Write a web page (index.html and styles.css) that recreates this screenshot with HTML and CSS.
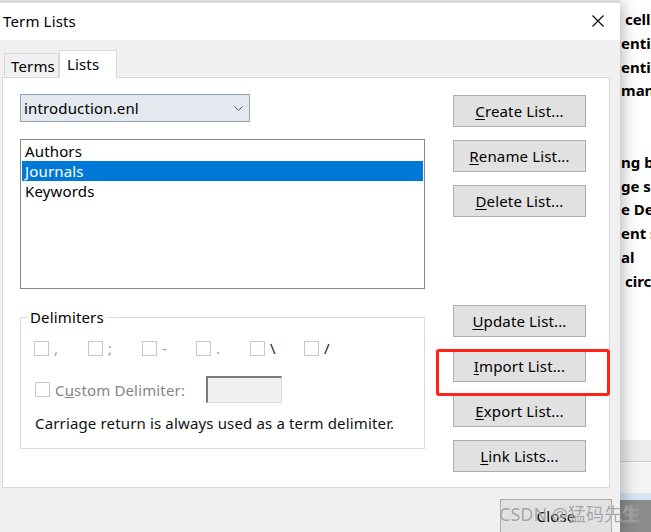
FILE: index.html
```html
<!DOCTYPE html>
<html lang="en">
  <head>
    <meta charset="UTF-8" />
    <meta name="viewport" content="width=device-width, initial-scale=1.0" />
    <title>Term Lists</title>
    <link rel="stylesheet" href="styles.css">
  </head>
  <body>
    <div class="screen">
      <div class="dialog">
        <div class="titlebar">
          <span class="title">Term Lists</span>
          <svg class="close-x" width="12" height="12" viewBox="0 0 12 12">
            <path d="M0.5 0.5 L11.5 11.5 M11.5 0.5 L0.5 11.5" stroke="#000" stroke-width="1.1" fill="none" />
          </svg>
        </div>

        <div class="dialog-body">
          <div class="tabs">
            <div class="tab">Terms</div>
            <div class="tab active">Lists</div>
          </div>

          <div class="tab-panel">
            <div class="left-col">
              <div class="combo">
                <span>introduction.enl</span>
                <svg class="chevron" width="9" height="5" viewBox="0 0 9 5">
                  <path d="M0.5 0.5 L4.5 4.5 L8.5 0.5" stroke="#555" stroke-width="1" fill="none" />
                </svg>
              </div>

              <div class="listbox">
                <div class="list-item">Authors</div>
                <div class="list-item selected">Journals</div>
                <div class="list-item">Keywords</div>
              </div>

              <fieldset class="delims">
                <legend>Delimiters</legend>
                <div class="check-row">
                  <div class="check"><span class="box"></span>,</div>
                  <div class="check"><span class="box"></span>;</div>
                  <div class="check"><span class="box"></span>-</div>
                  <div class="check"><span class="box"></span>.</div>
                  <div class="check dark"><span class="box"></span>\</div>
                  <div class="check dark"><span class="box"></span>/</div>
                </div>
                <div class="custom-row">
                  <span class="box"></span>
                  <span class="custom-label">C<u>u</u>stom Delimiter:</span>
                  <span class="custom-input"></span>
                </div>
                <p class="note">Carriage return is always used as a term delimiter.</p>
              </fieldset>
            </div>

            <div class="btn-col">
              <button class="btn"><u>C</u>reate List...</button>
              <button class="btn"><u>R</u>ename List...</button>
              <button class="btn"><u>D</u>elete List...</button>
              <button class="btn update"><u>U</u>pdate List...</button>
              <div class="marked">
                <button class="btn"><u>I</u>mport List...</button>
                <span class="highlight"></span>
              </div>
              <button class="btn"><u>E</u>xport List...</button>
              <button class="btn"><u>L</u>ink Lists...</button>
            </div>
          </div>

          <div class="footer">
            <button class="btn close-btn">Close</button>
          </div>
        </div>
      </div>

      <div class="backdrop">
        <div class="doc-text">
          <div class="doc-line">&nbsp;cells</div>
          <div class="doc-line">entia</div>
          <div class="doc-line">entia</div>
          <div class="doc-line">man</div>
          <div class="doc-line">&nbsp;</div>
          <div class="doc-line">&nbsp;</div>
          <div class="doc-line">ng bl</div>
          <div class="doc-line">ge se</div>
          <div class="doc-line">e Dev</div>
          <div class="doc-line">ent s</div>
          <div class="doc-line">al</div>
          <div class="doc-line">&nbsp;circu</div>
        </div>
        <div class="band band-a"></div>
        <div class="band band-b"></div>
        <div class="band band-c"></div>
        <div class="band band-d"></div>
      </div>

      <div class="watermark">CSDN @猛码先生</div>
    </div>
  </body>
</html>
```

FILE: styles.css
```css
html,
body {
  margin: 0;
  height: 100%;
  overflow: hidden;
}

body {
  font-family: "Segoe UI", "Noto Sans", Roboto, sans-serif;
  font-size: 15px;
  line-height: 20px;
  letter-spacing: 0.15px;
  color: #000;
  background-color: #fff;
}

.screen {
  position: relative;
  display: flex;
  height: 532px;
  width: 651px;
  overflow: hidden;
}

/* dialog window */

.dialog {
  position: relative;
  z-index: 1;
  width: 620px;
  flex-shrink: 0;
  border-top: 3px solid #dadada;
  box-shadow: 3px 2px 14px rgba(0, 0, 0, 0.28);
  background-color: #f0f0f0;
}

.titlebar {
  height: 37px;
  background-color: #fff;
  display: flex;
  align-items: center;
  justify-content: space-between;
  padding: 0 16px 0 3px;
}

.title {
  margin-top: -2px;
}

.close-x {
  margin-top: -1px;
}

.dialog-body {
  padding-top: 10px;
}

.tabs {
  display: flex;
  align-items: flex-end;
  height: 27px;
  margin-left: 4px;
}

.tab {
  height: 24px;
  box-sizing: border-box;
  padding: 0 6px;
  border: 1px solid #d9d9d9;
  border-bottom: none;
  display: flex;
  align-items: center;
  background-color: #f0f0f0;
  width: 55px;
}

.tab.active {
  position: relative;
  z-index: 1;
  height: 28px;
  margin-bottom: -1px;
  width: 58px;
  padding-left: 7px;
  background-color: #fff;
  padding-bottom: 2px;
}

.tab-panel {
  margin-left: 2px;
  width: 608px;
  height: 411px;
  box-sizing: border-box;
  border: 1px solid #d9d9d9;
  background-color: #fff;
  padding: 16px 0 0 17px;
  display: flex;
  gap: 27px;
}

/* left column */

.left-col {
  width: 406px;
}

.combo {
  width: 230px;
  height: 28px;
  box-sizing: border-box;
  border: 1px solid #8ea3ba;
  background-color: #e4e9ef;
  display: flex;
  align-items: center;
  justify-content: space-between;
  padding: 0 6px 0 3px;
}

.listbox {
  margin-top: 17px;
  width: 405px;
  height: 150px;
  box-sizing: border-box;
  border: 1px solid #828790;
  padding: 1px;
}

.list-item {
  padding-left: 3px;
  height: 20px;
  line-height: 20px;
}

.list-item.selected {
  background-color: #0078d7;
  color: #fff;
}

.delims {
  margin: 18px 0 0;
  width: 405px;
  box-sizing: border-box;
  border: 1px solid #dcdcdc;
  padding: 0 0 15px 13px;
  min-inline-size: 0;
}

.delims legend {
  margin-left: -6px;
  padding: 0 2px;
}

.check-row {
  margin-top: 11px;
  display: grid;
  grid-template-columns: repeat(6, 54px);
  height: 20px;
}

.check {
  display: flex;
  align-items: center;
  gap: 5px;
  color: #9a9a9a;
}

.check.dark {
  color: #222;
}

.box {
  width: 15px;
  height: 15px;
  box-sizing: border-box;
  border: 1px solid #c8c8c8;
  background-color: #fff;
  flex-shrink: 0;
}

.custom-row {
  margin-top: 18px;
  height: 27px;
  display: flex;
  align-items: center;
  padding-left: 1px;
}

.custom-label {
  margin-left: 5px;
  width: 151px;
  color: #858585;
}

.custom-input {
  width: 76px;
  height: 27px;
  box-sizing: border-box;
  background-color: #f0f0f0;
  border-style: solid;
  border-width: 2px 1px 1px 2px;
  border-color: #7a7a7a #dadada #dadada #7a7a7a;
}

.note {
  margin: 10px 0 0 1px;
  color: #111;
}

/* buttons */

.btn-col {
  padding-top: 1px;
  display: flex;
  flex-direction: column;
  gap: 13px;
}

.btn {
  width: 133px;
  height: 32px;
  box-sizing: border-box;
  border: 1px solid #adadad;
  background-color: #e1e1e1;
  font-family: inherit;
  font-size: 15px;
  letter-spacing: inherit;
  color: #000;
  padding: 0;
  text-align: center;
}

.btn u {
  text-underline-offset: 2px;
}

.btn.update {
  margin-top: 75px;
}

.marked {
  position: relative;
  height: 32px;
}

.highlight {
  position: absolute;
  left: -17px;
  right: -24px;
  top: -1px;
  bottom: -14px;
  border: 3px solid #ff2216;
  border-radius: 3px;
}

.footer {
  padding: 11px 0 0 500px;
}

.close-btn {
  width: 112px;
  height: 36px;
  padding-bottom: 2px;
}

/* what shows behind the dialog */

.backdrop {
  flex: 1;
  display: flex;
  flex-direction: column;
  background-color: #fff;
}

.doc-text {
  height: 440px;
  padding-top: 8px;
  box-sizing: border-box;
  font-weight: bold;
  white-space: nowrap;
  overflow: hidden;
  padding-left: 1px;
  letter-spacing: 0;
}

.doc-line {
  height: 23.8px;
  line-height: 23.8px;
}

.band-a {
  height: 21px;
  background-color: #ececec;
  border-bottom: 1px solid #cfcfcf;
}

.band-b {
  height: 31px;
  background-color: #f3f3f3;
}

.band-c {
  height: 7px;
  background-color: #d7e4f3;
}

.band-d {
  flex: 1;
  background-color: #8c8c8c;
}

.watermark {
  position: absolute;
  z-index: 2;
  left: 499px;
  top: 502px;
  font-family: "Noto Sans", "Noto Sans CJK SC", sans-serif;
  font-size: 18px;
  line-height: 24px;
  letter-spacing: 0;
  color: rgba(115, 115, 115, 0.65);
  text-shadow: 0 0 1px rgba(255, 255, 255, 0.8);
  white-space: nowrap;
}
```
